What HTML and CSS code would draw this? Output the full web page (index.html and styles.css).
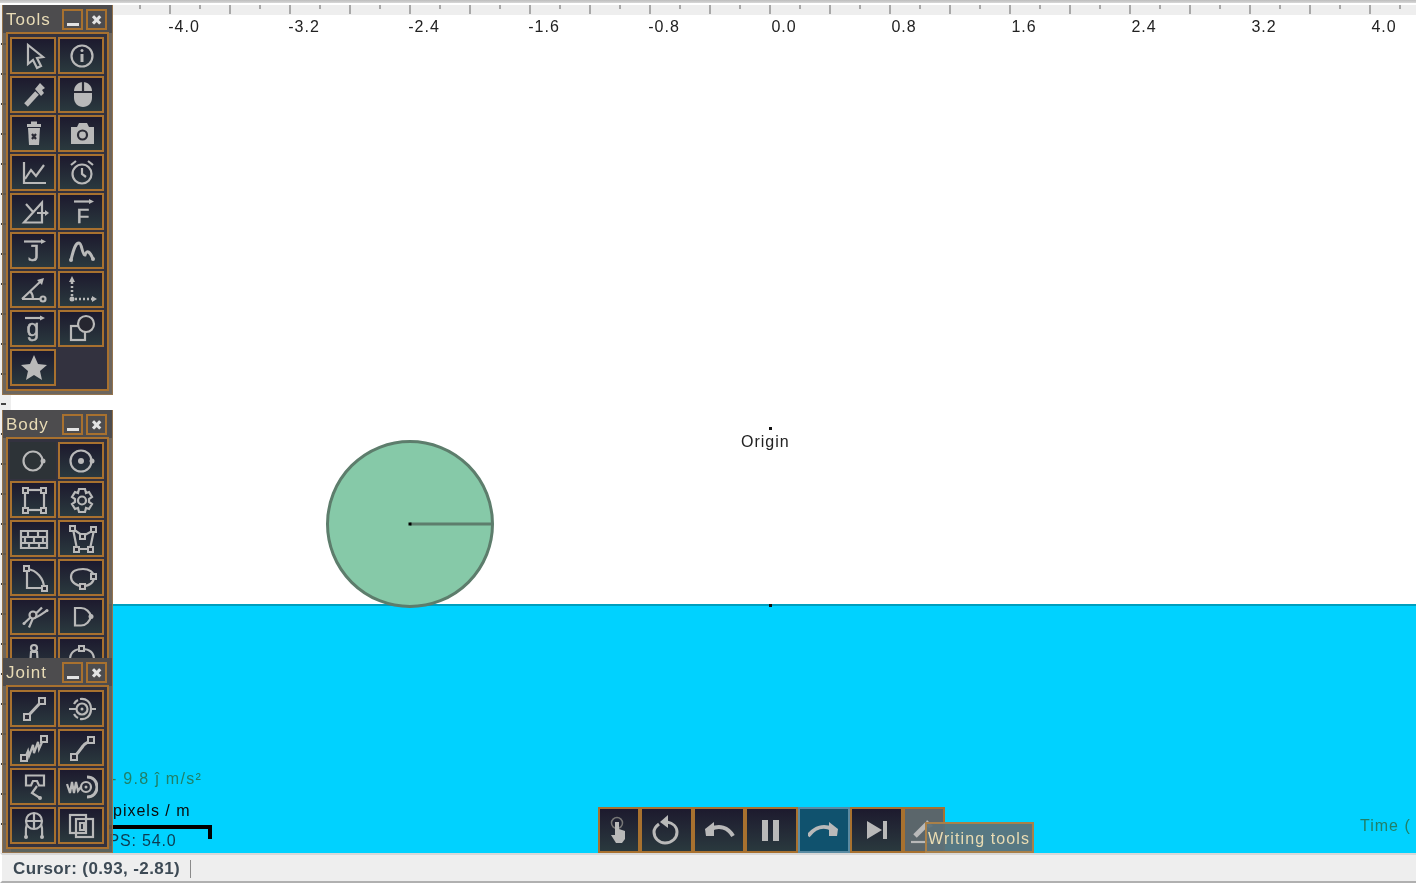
FILE: index.html
```html
<!DOCTYPE html>
<html lang="en">
<head>
    <meta charset="UTF-8">
    <title>Physics Simulator</title>
    <link rel="stylesheet" href="styles.css">
</head>
<body>
    <div class="ruler"></div>

    <div class="stage">
        <div class="side-ruler"></div>

        <div class="sky">
            <div class="scale">
                <span>-4.0</span><span>-3.2</span><span>-2.4</span><span>-1.6</span><span>-0.8</span><span>0.0</span>
                <span>0.8</span><span>1.6</span><span>2.4</span><span>3.2</span><span>4.0</span>
            </div>
        </div>
        <div class="water"></div>

        <!-- things in the scene -->
        <div class="origin-dot"></div>
        <div class="origin-label">Origin</div>
        <div class="ground-dot"></div>
        <svg class="wheel" width="172" height="172" viewBox="0 0 172 172">
            <circle cx="86" cy="86" r="82.5" fill="#86c9a8" stroke="#5d7d6c" stroke-width="3"/>
            <line x1="86" y1="86" x2="168" y2="86" stroke="#5d7d6c" stroke-width="3"/>
            <rect x="84.500" y="84.500" width="3" height="3" fill="#000"/>
        </svg>
        <div class="gravity">- 9.8 ĵ m/s²</div>
        <div class="pixels">pixels / m</div>
        <div class="scale-bar"></div>
        <div class="fps">FPS: 54.0</div>
        <div class="time">Time (</div>

        <!-- Tools window -->
        <div class="window win-tools">
            <div class="win-title"><span class="win-name">Tools</span><span class="win-btn"><span class="min-bar"></span></span><span class="win-btn close">✖</span></div>
            <div class="panel">
                <button class="tool"><svg class="ico" viewBox="0 0 32 32"><path d="M10 5V24L15 20L19 28L23 26L19 18L25 17Z"/></svg></button>
                <button class="tool"><svg class="ico" viewBox="0 0 32 32"><circle cx="16" cy="16" r="10.500"/><circle class="solid" cx="16" cy="10.500" r="1.500"/><path class="thick" d="M16 14V22"/></svg></button>
                <button class="tool"><svg class="ico" viewBox="0 0 32 32"><path class="thick5" d="M8 26L19 14"/><path class="solid" d="M17 10L22 4L27 9L24 11L26 14L23 17Z"/></svg></button>
                <button class="tool"><svg class="ico" viewBox="0 0 32 32"><path class="solid" d="M17 3C22 3 26 7 26 12V19C26 24 22 28 17 28C12 28 8 24 8 19V12C8 7 12 3 17 3Z"/><path class="cut" d="M8 13H26M17 3V13"/></svg></button>
                <button class="tool"><svg class="ico" viewBox="0 0 32 32"><path class="solid" d="M10 10H22L21 27H11Z"/><path class="thick" d="M9 7.500H23M13 5H19"/><path class="cut" d="M14 16L18 21M18 16L14 21"/></svg></button>
                <button class="tool"><svg class="ico" viewBox="0 0 32 32"><path class="solid" d="M5 9H11L13 5H21L23 9H28V26H5Z"/><circle class="cut" cx="16.500" cy="17" r="4.500"/></svg></button>
                <button class="tool"><svg class="ico" viewBox="0 0 32 32"><path d="M6 5V26H28"/><path d="M7 22L13 13L18 19L26 8"/></svg></button>
                <button class="tool"><svg class="ico" viewBox="0 0 32 32"><circle cx="16" cy="17" r="9.500"/><path d="M16 11V17L20 20M5 8L10 4M27 8L22 4"/></svg></button>
                <button class="tool"><svg class="ico" viewBox="0 0 32 32"><path d="M24 6.500L6 26.500H24ZM8 8L16 17M19 17H29"/><path class="solid" d="M27 14L31 17L27 20Z"/></svg></button>
                <button class="tool"><svg class="ico" viewBox="0 0 32 32"><path d="M8 5.500H25"/><path class="solid" d="M23 3L28 5.500L23 8Z"/><text class="letter" x="17" y="27">F</text></svg></button>
                <button class="tool"><svg class="ico" viewBox="0 0 32 32"><path d="M6 6.500H25"/><path class="solid" d="M23 4L28 6.500L23 9Z"/><text class="letter mono" x="16" y="26">J</text></svg></button>
                <button class="tool"><svg class="ico" viewBox="0 0 32 32"><path class="thick" d="M5 25C8 12 10 8 13 8C16 8 16 20 19 20C21 14 24 17 27 24"/><circle class="solid" cx="5" cy="25" r="2"/><circle class="solid" cx="27" cy="24" r="2"/></svg></button>
                <button class="tool"><svg class="ico" viewBox="0 0 32 32"><path d="M4 25L24 6M4 25H22M12 17C15 20 15 22 15 25"/><path class="solid" d="M19 6L26 4L24 11Z"/><circle cx="25" cy="25" r="2.500"/></svg></button>
                <button class="tool"><svg class="ico" viewBox="0 0 32 32"><path class="dots" d="M6 8V25H28"/><path class="solid" d="M3 8L6 2L9 8ZM26 22L31 25L26 28Z"/><circle class="solid" cx="6" cy="25" r="2.500"/></svg></button>
                <button class="tool"><svg class="ico" viewBox="0 0 32 32"><path d="M7 5H24"/><path class="solid" d="M22 2.500L27 5L22 7.500Z"/><text class="letter small" x="15" y="23">g</text></svg></button>
                <button class="tool"><svg class="ico" viewBox="0 0 32 32"><rect x="5" y="13" width="14" height="14"/><circle cx="20" cy="11" r="8" class="over"/></svg></button>
                <button class="tool"><svg class="ico" viewBox="0 0 32 32"><path class="solid" d="M16 3L20 12L29 13L22 19L24 28L16 23L8 28L10 19L3 13L12 12Z"/></svg></button>
            </div>
        </div>

        <!-- Body window -->
        <div class="window win-body">
            <div class="win-title"><span class="win-name">Body</span><span class="win-btn"><span class="min-bar"></span></span><span class="win-btn close">✖</span></div>
            <div class="panel">
                <button class="tool hover"><svg class="ico" viewBox="0 0 32 32"><circle cx="15" cy="16" r="9.500"/><circle class="solid" cx="25" cy="16" r="2.500"/></svg></button>
                <button class="tool"><svg class="ico" viewBox="0 0 32 32"><circle cx="15" cy="16" r="10.500"/><circle class="solid" cx="15" cy="16" r="3"/><circle class="solid" cx="26" cy="16" r="2.500"/></svg></button>
                <button class="tool"><svg class="ico" viewBox="0 0 32 32"><rect x="7" y="6" width="19" height="20"/><rect class="knob" x="5" y="4" width="5" height="5"/><rect class="knob" x="23" y="4" width="5" height="5"/><rect class="knob" x="5" y="24" width="5" height="5"/><rect class="knob" x="23" y="24" width="5" height="5"/></svg></button>
                <button class="tool"><svg class="ico" viewBox="0 0 32 32"><path d="M13 5H19L20 9L23 8L26 13L23 15V18L26 20L23 25L20 24L19 28H13L12 24L9 25L6 20L9 18V15L6 13L9 8L12 9Z"/><circle cx="16" cy="16.500" r="4"/></svg></button>
                <button class="tool"><svg class="ico" viewBox="0 0 32 32"><path d="M3 8H29V25H3ZM3 14H29M3 20H29M10 8V14M20 8V14M7 14V20M16 14V20M25 14V20M11 20V25M21 20V25"/></svg></button>
                <button class="tool"><svg class="ico" viewBox="0 0 32 32"><path d="M7 6L11 26H24L28 7L17 13Z"/><rect class="knob" x="4" y="3" width="5" height="5"/><rect class="knob" x="25" y="4" width="5" height="5"/><rect class="knob" x="14" y="11" width="5" height="5"/><rect class="knob" x="8" y="24" width="5" height="5"/><rect class="knob" x="22" y="24" width="5" height="5"/></svg></button>
                <button class="tool"><svg class="ico" viewBox="0 0 32 32"><path d="M9 7V26H26C26 17 19 8 9 7Z"/><rect class="knob" x="6" y="4" width="5" height="5"/><rect class="knob" x="24" y="24" width="5" height="5"/></svg></button>
                <button class="tool"><svg class="ico" viewBox="0 0 32 32"><path d="M5 15C5 9 11 7 17 7C23 7 28 10 28 15C28 20 24 24 17 24C10 24 5 20 5 15Z"/><rect class="knob" x="25" y="12" width="5" height="5"/><rect class="knob" x="14" y="22" width="5" height="5"/></svg></button>
                <button class="tool"><svg class="ico" viewBox="0 0 32 32"><path d="M6 22.500L15 14C19 12 21 10 24 6.500M11 26.500L15 17C19 17 24 13 29 9.500"/><circle class="over" cx="15" cy="14" r="3.500"/><circle class="solid" cx="6" cy="22.500" r="1.500"/><circle class="solid" cx="29" cy="9.500" r="1.500"/></svg></button>
                <button class="tool"><svg class="ico" viewBox="0 0 32 32"><path d="M9 7H15C20 7 24 11 25 15.500C24 20 20 24.500 15 24.500H9Z"/><circle class="solid" cx="25" cy="15.500" r="2.500"/></svg></button>
                <button class="tool"><svg class="ico" viewBox="0 0 32 32"><circle cx="16" cy="8" r="3"/><path d="M12 27L13 12H19L20 27M8 27H12M20 27H24"/></svg></button>
                <button class="tool"><svg class="ico" viewBox="0 0 32 32"><path d="M4 20C4 12 9 9 16 9C23 9 28 12 28 20"/><rect class="knob" x="13" y="6" width="5" height="5"/></svg></button>
            </div>
        </div>

        <!-- Joint window -->
        <div class="window win-joint">
            <div class="win-title"><span class="win-name">Joint</span><span class="win-btn"><span class="min-bar"></span></span><span class="win-btn close">✖</span></div>
            <div class="panel">
                <button class="tool"><svg class="ico" viewBox="0 0 32 32"><path class="thick" d="M9 24L24 8"/><rect class="knob" x="6" y="21" width="6" height="6"/><rect class="knob" x="21" y="5" width="6" height="6"/></svg></button>
                <button class="tool"><svg class="ico" viewBox="0 0 32 32"><circle cx="16" cy="16" r="5.500"/><circle class="solid" cx="16" cy="16" r="1.500"/><path d="M14 6C20 5 25 9 25 16C25 23 20 27 14 26M3 16H10M25 16H30M12 7C10 8 9 9 8 11M8 21C9 23 10 24 12 25"/></svg></button>
                <button class="tool"><svg class="ico" viewBox="0 0 32 32"><path d="M7 26L10 19L11 24L15 13L16 21L20 10L21 17L25 8"/><rect class="knob" x="3" y="23" width="6" height="6"/><rect class="knob" x="23" y="4" width="6" height="6"/></svg></button>
                <button class="tool"><svg class="ico" viewBox="0 0 32 32"><path class="thick" d="M8 25C14 19 14 18 17 14C19 11 21 11 24 9"/><rect class="knob" x="5" y="22" width="6" height="6"/><rect class="knob" x="22" y="5" width="6" height="6"/></svg></button>
                <button class="tool"><svg class="ico" viewBox="0 0 32 32"><path d="M8 4.500H26V14.500H21L19 10H15L13 14.500H8ZM19 15L14 22L22 27"/><circle class="solid" cx="22" cy="27" r="2"/></svg></button>
                <button class="tool"><svg class="ico" viewBox="0 0 32 32"><path d="M1 13L4 22L6 11L8 22L10 11L12 20L15 16"/><circle cx="20" cy="16" r="5"/><circle class="solid" cx="20" cy="16" r="1.500"/><path class="thick" d="M21 6C27 6 31 10 31 16C31 22 27 26 21 26"/></svg></button>
                <button class="tool"><svg class="ico" viewBox="0 0 32 32"><circle cx="16" cy="11" r="8"/><path d="M8 11H24M16 3V19M9 14C7 19 8 23 8 27M23 14C25 19 24 23 24 27"/><circle class="solid" cx="8" cy="27" r="2"/><circle class="solid" cx="24" cy="27" r="2"/></svg></button>
                <button class="tool"><svg class="ico" viewBox="0 0 32 32"><rect x="4" y="5" width="16" height="18"/><rect x="10" y="9" width="17" height="18"/><path d="M14 13H18V20H14Z"/></svg></button>
            </div>
        </div>

        <!-- playback bar -->
        <div class="playbar">
            <button class="play narrow"><svg class="ico" viewBox="0 0 32 32"><circle class="thin" cx="14" cy="9" r="5.500"/><path class="solid" d="M12 8H16V15L22 17V25L19 29H13L8 21L12 21Z"/></svg></button>
            <button class="play"><svg class="ico" viewBox="0 0 32 32"><path class="thick" d="M9 10C5 13 4 16 4 18C4 24 9 29 15 29C22 29 27 24 27 18C27 13 23 9 17 8"/><path class="solid" d="M18 1V14L10 8Z"/></svg></button>
            <button class="play"><svg class="ico" viewBox="0 0 32 32"><path class="thick4" d="M8 15C16 11 25 13 30 22"/><path class="solid" d="M2 15L11 8V22H3Z"/></svg></button>
            <button class="play"><svg class="ico" viewBox="0 0 32 32"><path class="solid" d="M7 6H13V27H7ZM18 6H24V27H18Z"/></svg></button>
            <button class="play active"><svg class="ico" viewBox="0 0 32 32"><path class="thick4" d="M0 22C7 13 16 11 24 15"/><path class="solid" d="M30 15L21 8V22H29Z"/></svg></button>
            <button class="play"><svg class="ico" viewBox="0 0 32 32"><path class="solid" d="M7 7L22 16L7 25ZM23 7H27V25H23Z"/></svg></button>
            <button class="play pen"><svg class="ico" viewBox="0 0 32 32"><path class="thick5" d="M6 22L18 10"/><path class="solid" d="M18 6L24 12L20 14L16 10Z"/><path d="M2 28H22"/></svg></button>
            <div class="tooltip">Writing tools</div>
        </div>
    </div>

    <div class="status">
        <span class="cursor-pos">Cursor: (0.93, -2.81)</span>
        <span class="status-sep"></span>
    </div>
</body>
</html>
```

FILE: styles.css
```css
html, body {
    margin: 0;
    height: 885px;
    overflow: hidden;
    background: #fff;
}
body {
    display: flex;
    flex-direction: column;
    font-family: "Liberation Sans", Arial, sans-serif;
    font-size: 16px;
    letter-spacing: 1px;
    filter: blur(0.4px);
}

/* rulers */
.ruler {
    height: 15px;
    flex: none;
    background:
        linear-gradient(90deg, transparent 49px, #a8a8a8 49px, #a8a8a8 51px, transparent 51px) 0 5px / 60px 9px repeat-x,
        linear-gradient(90deg, transparent 19px, #a8a8a8 19px, #a8a8a8 21px, transparent 21px) 0 5px / 60px 4px repeat-x,
        linear-gradient(#eee, #eee) 0 5px / 100% 10px no-repeat,
        linear-gradient(#bdbdbd, #d8d8d8) 0 0 / 100% 3px no-repeat,
        #fff;
}
.side-ruler {
    position: absolute;
    left: 0;
    top: 0;
    width: 11px;
    height: 100%;
    background-color: #eee;
    background-image: linear-gradient(transparent 28px, #444 28px, #444 30px, transparent 30px);
    background-size: 5px 30px;
    background-repeat: repeat-y;
    background-position: 1px 0;
    z-index: 1;
}

.stage {
    flex: 1;
    position: relative;
    display: flex;
    flex-direction: column;
}
.sky {
    flex: 1;
    background: #fff;
    overflow: hidden;
}
.scale {
    display: flex;
    padding: 3px 0 0 124px;
    color: #222;
    line-height: 18px;
}
.scale span {
    flex: none;
    width: 120px;
    text-align: center;
}
.water {
    height: 249px;
    flex: none;
    box-sizing: border-box;
    background: #00d2ff;
    border-top: 2px solid #009fbe;
}

/* scene */
.origin-dot, .ground-dot {
    position: absolute;
    left: 769px;
    width: 3px;
    height: 3px;
    background: #111;
}
.origin-dot { top: 412px; }
.ground-dot { top: 589px; }
.origin-label {
    position: absolute;
    left: 741px;
    top: 418px;
    color: #222;
    line-height: 18px;
}
.wheel {
    position: absolute;
    left: 324px;
    top: 423px;
}
.gravity {
    position: absolute;
    left: 111px;
    top: 755px;
    color: #1f8068;
    letter-spacing: 1.3px;
}
.pixels {
    position: absolute;
    left: 113px;
    top: 787px;
    color: #0a0a0a;
    letter-spacing: 1px;
}
.scale-bar {
    position: absolute;
    left: 106px;
    top: 810px;
    width: 102px;
    height: 10px;
    border-top: 4px solid #000;
    border-right: 4px solid #000;
}
.fps {
    position: absolute;
    left: 98px;
    top: 817px;
    color: #0c3b50;
    letter-spacing: 0.8px;
}
.time {
    position: absolute;
    left: 1360px;
    top: 802px;
    color: #1f8068;
    white-space: nowrap;
}

/* floating windows */
.window {
    position: absolute;
    left: 2px;
    width: 111px;
    box-sizing: border-box;
    padding: 0 4px 5px;
    background: rgba(98, 90, 82, 0.93);
    box-shadow: inset 0 0 0 1px #94744e;
    z-index: 2;
}
.win-tools { top: -10px; height: 390px; }
.win-body { top: 395px; height: 263px; overflow: hidden; }
.win-joint { top: 643px; height: 195px; z-index: 3; }
.win-title {
    height: 28px;
    margin: 0 -3px;
    padding: 1px 3px 0;
    box-sizing: border-box;
    display: flex;
    align-items: center;
    gap: 3px;
    color: #e8dbb6;
    font-size: 17px;
    background: #4d4c4e;
}
.win-name { flex: 1; }
.win-btn {
    width: 17px;
    height: 17px;
    flex: none;
    border: 2px solid #a8712f;
    display: flex;
    align-items: center;
    justify-content: center;
    letter-spacing: 0;
    font-family: "DejaVu Sans", sans-serif;
    font-size: 14px;
    font-weight: bold;
    color: #e3e3e3;
}
.close { margin-right: 2px; }
.min-bar {
    width: 12px;
    height: 3px;
    margin-top: 9px;
    background: #e3e3e3;
}
.panel {
    display: grid;
    grid-template-columns: 46px 46px;
    grid-auto-rows: 37px;
    gap: 2px;
    padding: 3px 2px 3px;
    background: #33323f;
    border: 2px solid #a8712f;
    box-sizing: border-box;
    margin-top: -1px;
    justify-content: start;
}
.tool, .play {
    display: flex;
    align-items: center;
    justify-content: center;
    padding: 0;
    margin: 0;
    box-sizing: border-box;
    border: 2px solid #a8712f;
    background: linear-gradient(#1d1a2e, #2a393e);
}
.tool .ico { margin-left: 2px; }
.tool.hover {
    border-color: transparent;
    background: #2d3337;
}

/* icons */
.ico {
    width: 32px;
    height: 32px;
    flex: none;
    fill: none;
    stroke: #b9b9b9;
    stroke-width: 2.2;
}
.ico .solid { fill: #b9b9b9; stroke: none; }
.ico .cut { stroke: #2a2b35; }
.ico .knob { fill: #2a2b35; stroke-width: 2; }
.ico .over { fill: #26262f; }
.ico .thick { stroke-width: 3; }
.ico .thick4 { stroke-width: 4; }
.ico .thick5 { stroke-width: 5; }
.ico .thin { stroke-width: 1.500; stroke: #777; }
.ico .dots { stroke-dasharray: 2 2; stroke-width: 2.500; }
.ico .letter {
    fill: #b9b9b9;
    stroke: #b9b9b9;
    stroke-width: 0.5;
    font-family: "Liberation Sans", sans-serif;
    font-size: 21px;
    letter-spacing: 0;
    text-anchor: middle;
}
.ico .letter.mono { font-family: "DejaVu Sans Mono", monospace; font-size: 21px; }
.ico .letter.small { font-size: 23px; }

/* playback */
.playbar {
    position: absolute;
    left: 598px;
    bottom: 0;
    display: flex;
    height: 46px;
    z-index: 2;
}
.play {
    width: 52.500px;
    height: 100%;
}
.play.narrow { width: 42px; }
.play.active {
    background: #10526e;
    border-color: #5b8ba2;
}
.play.pen {
    width: 42px;
    background: #5b666b;
    justify-content: flex-start;
}
.play.pen .ico { margin-left: 4px; }
.tooltip {
    position: absolute;
    left: 327px;
    top: 15px;
    width: 109px;
    height: 31px;
    box-sizing: border-box;
    border: 2px solid #a98049;
    background: rgba(92, 113, 122, 0.93);
    color: #eadcb3;
    line-height: 29px;
    padding-left: 1px;
    letter-spacing: 1.1px;
    white-space: nowrap;
}

/* status bar */
.status {
    height: 30px;
    flex: none;
    box-sizing: border-box;
    background: #eeeeee;
    border-top: 2px solid #d8d8d8;
    border-left: 2px solid #fff;
    border-bottom: 2px solid #b0b0b0;
    margin-bottom: 2px;
    padding: 2px 0 0 11px;
    display: flex;
    align-items: center;
    gap: 10px;
    color: #3d4a55;
    font-size: 17px;
    font-weight: bold;
    letter-spacing: 0.4px;
}
.status-sep {
    width: 1px;
    height: 18px;
    background: #8a8a8a;
}
```
